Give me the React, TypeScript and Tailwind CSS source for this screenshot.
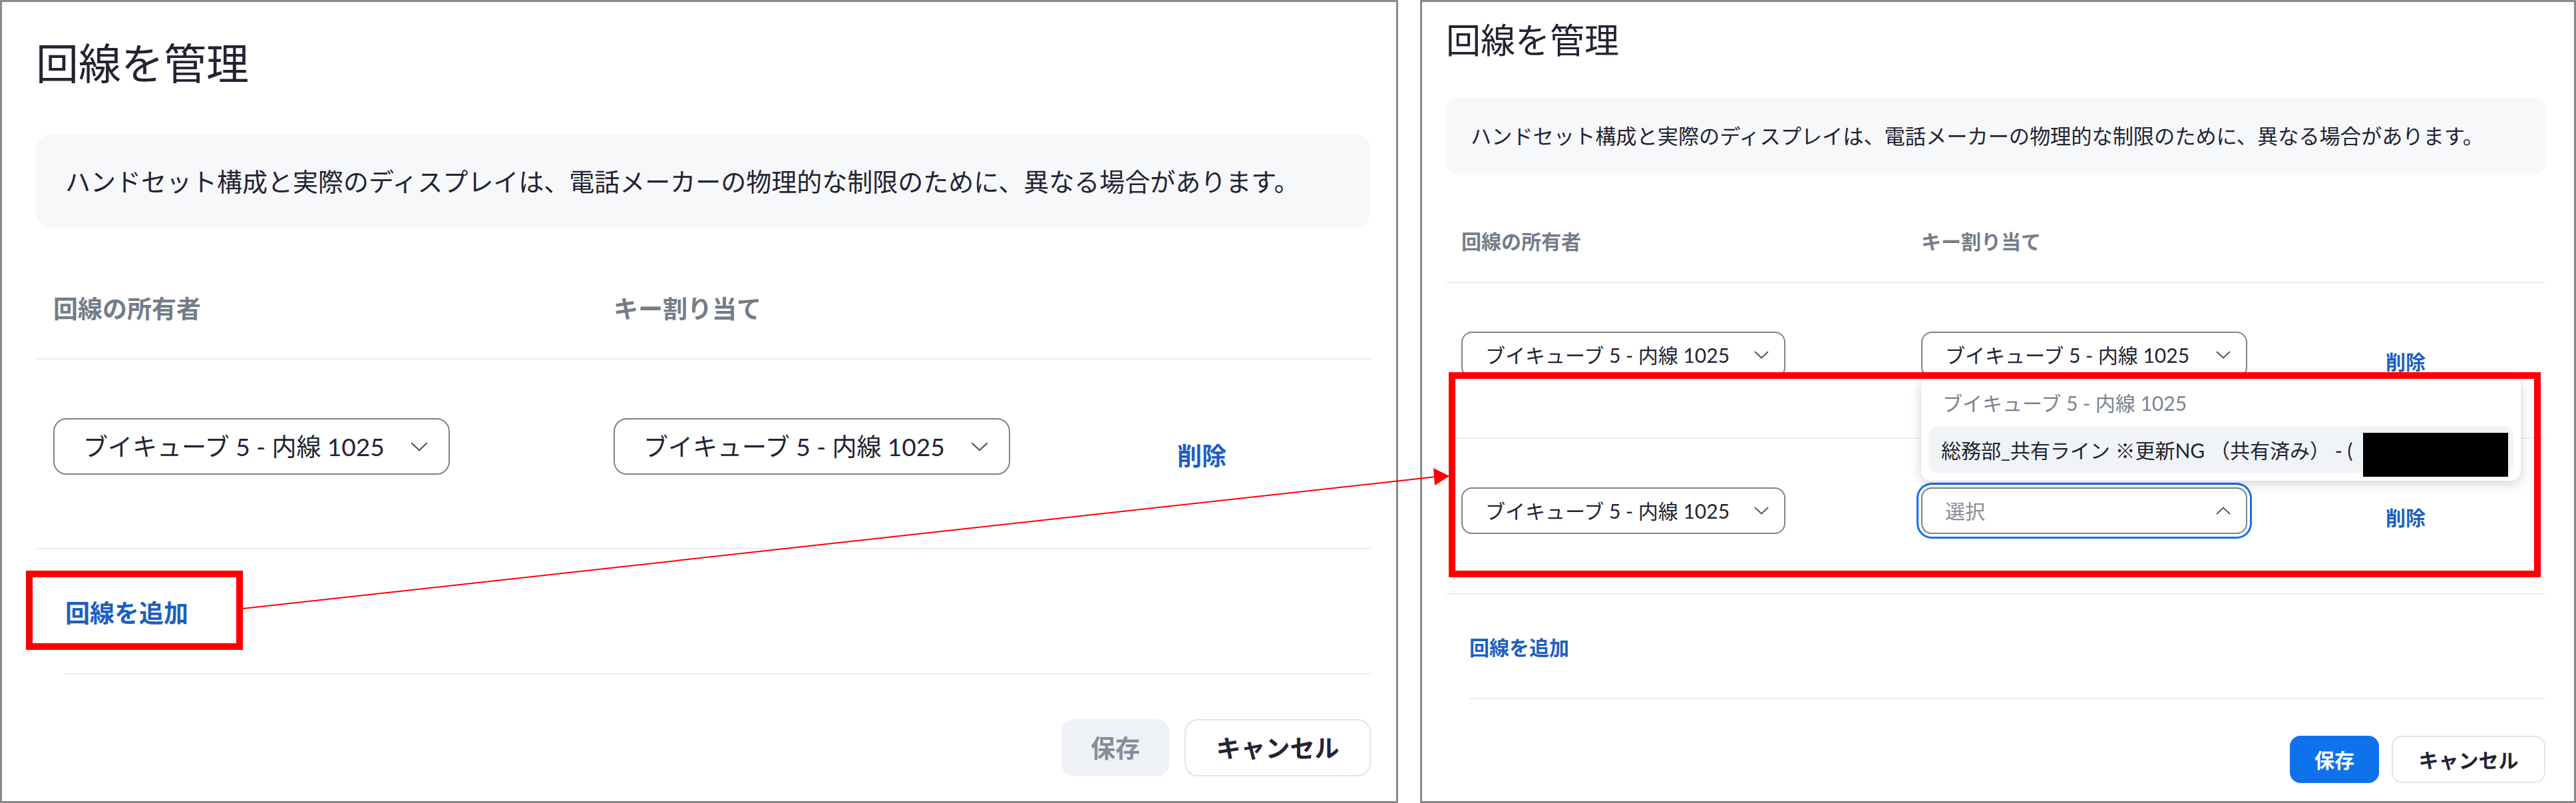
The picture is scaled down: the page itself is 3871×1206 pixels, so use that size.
import React from "react";

const NOTICE =
  "ハンドセット構成と実際のディスプレイは、電話メーカーの物理的な制限のために、異なる場合があります。";
const LINE_NAME = "ブイキューブ 5 - 内線 1025";

function Chevron({ up = false, className }: { up?: boolean; className: string }) {
  return (
    <svg viewBox="0 0 22 12" className={className} fill="none">
      <polyline
        points={up ? "1.5,10.5 11,1.5 20.5,10.5" : "1.5,1.5 11,10.5 20.5,1.5"}
        stroke="#4b5059"
        strokeWidth="1.8"
        strokeLinecap="round"
        strokeLinejoin="round"
      />
    </svg>
  );
}

function LgSelect() {
  return (
    <div className="flex h-[85px] w-[596px] items-center justify-between rounded-[20px] border-2 border-[#7d848f] pl-[43px] pr-[31px] text-[37px] leading-none">
      <span>{LINE_NAME}</span>
      <Chevron className="h-[14px] w-[26px]" />
    </div>
  );
}

function SmSelect({ width, focused = false }: { width: string; focused?: boolean }) {
  if (focused) {
    return (
      <div className="flex h-[70px] w-[490px] items-center justify-between rounded-[16px] border-2 border-[#7d848f] pl-[34px] pr-[23px] text-[30px] leading-none text-[#868d97] ring-[3px] ring-[#0e72ed] ring-offset-[4px] ring-offset-white">
        <span>選択</span>
        <Chevron up className="h-[12px] w-[22px]" />
      </div>
    );
  }
  return (
    <div
      className={`flex h-[70px] items-center justify-between rounded-[16px] border-2 border-[#7d848f] pl-[34px] pr-[23px] text-[30px] leading-none ${width}`}
    >
      <span>{LINE_NAME}</span>
      <Chevron className="h-[12px] w-[22px]" />
    </div>
  );
}

function LeftPanel() {
  return (
    <div className="flex h-[1206px] w-[2101px] shrink-0 flex-col border-[3px] border-[#8a8a8a] bg-white pl-[51px] pr-[38px] pt-[60px]">
      <h1 className="text-[64px] font-normal leading-none">回線を管理</h1>

      <div className="mt-[74px] flex h-[141px] items-center rounded-[25px] bg-[#f7f8fa] pl-[44px] text-[38px] leading-none">
        {NOTICE}
      </div>

      {/* column headers */}
      <div className="mt-[103px] flex border-b-2 border-[#eceef2] pb-[56px] pl-[26px] text-[37px] font-semibold leading-none text-[#747d88]">
        <div className="w-[842px]">回線の所有者</div>
        <div>キー割り当て</div>
      </div>

      <div className="flex h-[285px] items-start border-b-2 border-[#eceef2] pl-[26px] pt-[88px]">
        <div className="w-[842px]">
          <LgSelect />
        </div>
        <div className="w-[847px]">
          <LgSelect />
        </div>
        <button className="mt-[38px] text-[37px] font-bold leading-none text-[#1d5fc2]">削除</button>
      </div>

      <div className="ml-[43px] border-b-2 border-[#eceef2] pb-[70px] pl-[1px] pt-[77px]">
        <button className="text-[37px] font-bold leading-none text-[#1d5fc2]">回線を追加</button>
      </div>

      <div className="mt-[67px] flex justify-end gap-[23px]">
        <button className="h-[86px] w-[162px] rounded-[20px] bg-[#eef1f5] text-[37px] font-bold leading-none text-[#858d98]">
          保存
        </button>
        <button className="h-[86px] w-[280px] rounded-[20px] border-2 border-[#e1e4e9] text-[37px] font-bold leading-none">
          キャンセル
        </button>
      </div>
    </div>
  );
}

function RightPanel() {
  return (
    <div className="flex h-[1206px] w-[1737px] shrink-0 flex-col border-[3px] border-[#8a8a8a] bg-white pl-[36px] pr-[43px] pt-[31px]">
      <h1 className="text-[52px] font-normal leading-none">回線を管理</h1>

      <div className="mt-[61px] flex h-[116px] items-center rounded-[20px] bg-[#f7f8fa] pl-[37px] text-[31.2px] leading-none">
        {NOTICE}
      </div>

      <div className="mt-[84px] flex border-b-2 border-[#eceef2] pb-[46px] pl-[23px] text-[30px] font-semibold leading-none text-[#747d88]">
        <div className="w-[691px]">回線の所有者</div>
        <div>キー割り当て</div>
      </div>

      {/* row 1 */}
      <div className="flex h-[234px] items-start border-b-2 border-[#eceef2] pl-[23px] pt-[73px]">
        <div className="w-[691px]">
          <SmSelect width="w-[487px]" />
        </div>
        <div className="w-[698px]">
          <SmSelect width="w-[490px]" />
        </div>
        <button className="mt-[30px] text-[30px] font-bold leading-none text-[#1d5fc2]">削除</button>
      </div>

      {/* row 2, key select open */}
      <div className="flex h-[234px] items-start border-b-2 border-[#eceef2] pl-[23px] pt-[73px]">
        <div className="w-[691px]">
          <SmSelect width="w-[487px]" />
        </div>
        <div className="relative w-[698px]">
          <div className="absolute bottom-[80px] left-0 z-10 flex w-[901px] flex-col rounded-[14px] bg-white p-[11px] shadow-[0_4px_18px_rgba(0,0,0,0.18)]">
            <div className="flex h-[63px] items-center pb-[7px] pl-[21px] text-[30px] leading-none text-[#7b838e]">
              {LINE_NAME}
            </div>
            <div className="relative flex h-[71px] items-center whitespace-nowrap rounded-[14px] bg-[#f1f4f7] pl-[19px] text-[30px] leading-none">
              総務部_共有ライン ※更新NG （共有済み） - (
              <div className="absolute left-[653px] top-[10px] h-[66px] w-[218px] bg-black" />
            </div>
          </div>
          <SmSelect width="w-[490px]" focused />
        </div>
        <button className="mt-[30px] text-[30px] font-bold leading-none text-[#1d5fc2]">削除</button>
      </div>

      <div className="ml-[35px] border-b-2 border-[#eceef2] pb-[58px] pt-[64px]">
        <button className="text-[30px] font-bold leading-none text-[#1d5fc2]">回線を追加</button>
      </div>

      <div className="mt-[55px] flex justify-end gap-[19px]">
        <button className="h-[71px] w-[134px] rounded-[16px] bg-[#0e72ed] text-[30px] font-bold leading-none text-white">
          保存
        </button>
        <button className="h-[71px] w-[231px] rounded-[16px] border-2 border-[#e1e4e9] text-[30px] font-bold leading-none">
          キャンセル
        </button>
      </div>
    </div>
  );
}

export default function App() {
  return (
    <div className="relative flex h-[1206px] w-[3871px] gap-[33px] bg-white font-['Lato','Noto_Sans_CJK_JP',sans-serif] text-[#232333]">
      <LeftPanel />
      <RightPanel />

      {/* annotations */}
      <div className="pointer-events-none absolute left-[39px] top-[857px] z-20 h-[119px] w-[326px] border-[10px] border-[#ff0000]" />
      <div className="pointer-events-none absolute left-[2177px] top-[559px] z-20 h-[308px] w-[1641px] border-[10px] border-[#ff0000]" />
      <svg className="pointer-events-none absolute left-0 top-0 z-20" width="3871" height="1206">
        <line x1="365" y1="914" x2="2158" y2="716" stroke="#ff0000" strokeWidth="2" />
        <polygon points="2178,715 2154,703 2156,729" fill="#ff0000" />
      </svg>
    </div>
  );
}
